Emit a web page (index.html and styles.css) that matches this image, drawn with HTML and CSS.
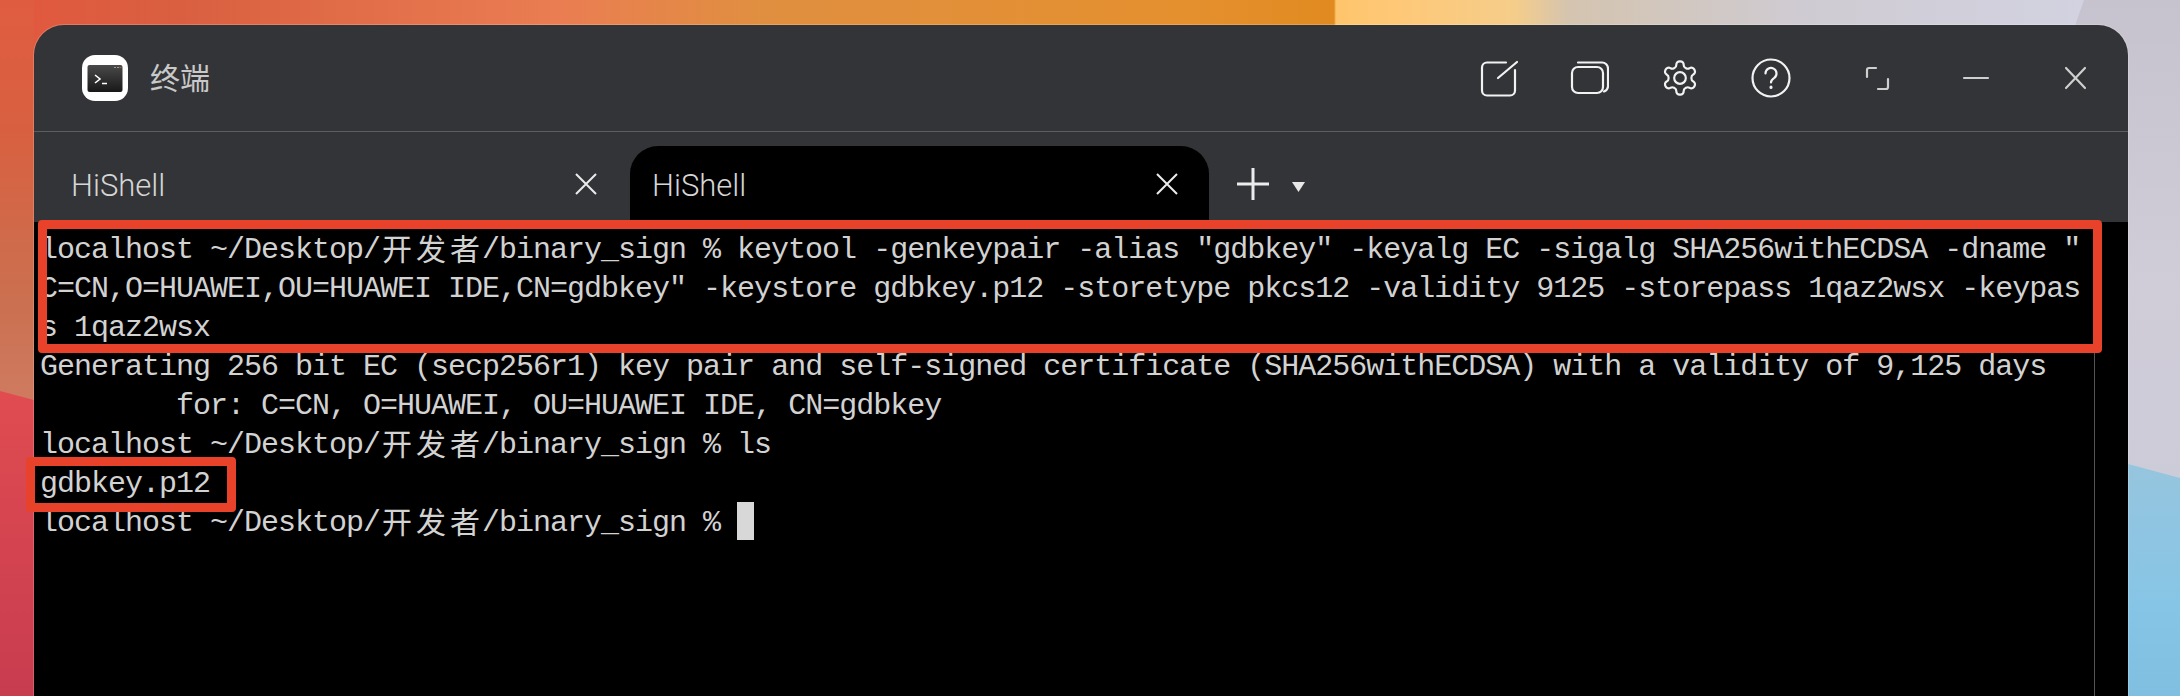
FILE: index.html
```html
<!DOCTYPE html>
<html lang="zh">
<head>
<meta charset="utf-8">
<title>终端</title>
<link rel="stylesheet" href="styles.css">
</head>
<body>
<div class="wedge"></div>
<div class="blue"></div>
<div class="wall-left"></div>
<div class="pink"></div>
<main class="window">
  <header class="titlebar">
    <svg class="appicon" viewBox="0 0 46 46">
      <rect width="46" height="46" rx="13" fill="#fff"/>
      <defs><linearGradient id="g" x1="0" y1="0" x2="0" y2="1"><stop offset="0" stop-color="#4a4a4a"/><stop offset="1" stop-color="#181818"/></linearGradient></defs>
      <rect x="5.500" y="10" width="35" height="27" rx="2" fill="url(#g)"/>
      <path d="M13 20l5 4-5 4" fill="none" stroke="#fff" stroke-width="1.600"/>
      <path d="M20 28.500h5" stroke="#fff" stroke-width="1.600"/>
      <path d="M32 12.500h2M35 12.500h2" stroke="#999" stroke-width="1"/>
      <path d="M37.500 12.500h2" stroke="#c0503c" stroke-width="1"/>
    </svg>
    <span class="apptitle">终端</span>
    <div class="tools">
      <svg class="ic" viewBox="0 0 40 40"><path d="M28 4.500H9a5 5 0 0 0-5 5v23a5 5 0 0 0 5 5h23a5 5 0 0 0 5-5V12"/><path d="M39 4L20 20"/></svg>
      <svg class="ic" viewBox="0 0 40 40"><rect x="3" y="9" width="31" height="26" rx="6"/><path d="M9 4.500h24a6 6 0 0 1 6 6v18a6 6 0 0 1-4 5"/></svg>
      <svg class="ic" viewBox="0 0 24 24"><path class="thin" d="M12.220 2h-.44a2 2 0 0 0-2 2v.18a2 2 0 0 1-1 1.730l-.43.25a2 2 0 0 1-2 0l-.15-.08a2 2 0 0 0-2.730.73l-.22.38a2 2 0 0 0 .73 2.730l.15.1a2 2 0 0 1 1 1.720v.51a2 2 0 0 1-1 1.740l-.15.09a2 2 0 0 0-.73 2.730l.22.38a2 2 0 0 0 2.730.73l.15-.08a2 2 0 0 1 2 0l.43.25a2 2 0 0 1 1 1.730V20a2 2 0 0 0 2 2h.44a2 2 0 0 0 2-2v-.18a2 2 0 0 1 1-1.730l.43-.25a2 2 0 0 1 2 0l.15.08a2 2 0 0 0 2.730-.73l.22-.39a2 2 0 0 0-.73-2.730l-.15-.08a2 2 0 0 1-1-1.740v-.5a2 2 0 0 1 1-1.740l.15-.09a2 2 0 0 0 .73-2.730l-.22-.38a2 2 0 0 0-2.730-.73l-.15.08a2 2 0 0 1-2 0l-.43-.25a2 2 0 0 1-1-1.730V4a2 2 0 0 0-2-2z"/><circle class="thin" cx="12" cy="12" r="3.500"/></svg>
      <svg class="ic" viewBox="0 0 40 40"><circle cx="20" cy="20" r="18.500"/><path d="M14.500 15.500a5.500 5.500 0 1 1 8.500 4.600c-2 1.300-3 2.400-3 4.400"/><path class="dot" d="M20 29v.5"/></svg>
      <div class="winbtns">
        <svg class="ic dim" viewBox="0 0 40 40"><path d="M10 19v-7a2 2 0 0 1 2-2h7"/><path d="M31 21v8a2 2 0 0 1-2 2h-8"/></svg>
        <svg class="ic dim" viewBox="0 0 40 40"><path d="M8 20h24"/></svg>
        <svg class="ic dim" viewBox="0 0 40 40"><path d="M11 10l19 20M30 10L11 30"/></svg>
      </div>
    </div>
  </header>
  <nav class="tabbar">
    <div class="tab first">
      <span class="tabname">HiShell</span>
      <svg class="tabx" viewBox="0 0 24 24"><path d="M2 2l20 20M22 2L2 22"/></svg>
    </div>
    <div class="tab active">
      <span class="tabname">HiShell</span>
      <svg class="tabx" viewBox="0 0 24 24"><path d="M2 2l20 20M22 2L2 22"/></svg>
    </div>
    <svg class="plus" viewBox="0 0 32 32"><path d="M0 16h32M16 0v32"/></svg>
    <span class="caret"></span>
  </nav>
  <section class="term">
    <div class="line">localhost ~/Desktop/<span class="cjk">开发者</span>/binary_sign % keytool -genkeypair -alias "gdbkey" -keyalg EC -sigalg SHA256withECDSA -dname "</div>
    <div class="line">C=CN,O=HUAWEI,OU=HUAWEI IDE,CN=gdbkey" -keystore gdbkey.p12 -storetype pkcs12 -validity 9125 -storepass 1qaz2wsx -keypas</div>
    <div class="line">s 1qaz2wsx</div>
    <div class="line">Generating 256 bit EC (secp256r1) key pair and self-signed certificate (SHA256withECDSA) with a validity of 9,125 days</div>
    <div class="line">        for: C=CN, O=HUAWEI, OU=HUAWEI IDE, CN=gdbkey</div>
    <div class="line">localhost ~/Desktop/<span class="cjk">开发者</span>/binary_sign % ls</div>
    <div class="line">gdbkey.p12</div>
    <div class="line">localhost ~/Desktop/<span class="cjk">开发者</span>/binary_sign % <span class="cursor"></span></div>
    <div class="rule"></div>
  </section>
</main>
<div class="mark mark-a"></div>
<div class="mark mark-b"></div>
</body>
</html>
```
FILE: styles.css
```css
* { box-sizing: border-box; }
html, body { margin: 0; height: 696px; overflow: hidden; }
body {
  position: relative;
  padding: 25px 52px 0 34px;
  background:
    linear-gradient(90deg, #e2583f 0, #d95f40 180px, #ea7d52 556px, #e08f40 765px, #e4902f 1180px, #e08a20 1334px, #ffc56c 1336px, #fec878 1400px, #f5cd8a 1515px, #d4c4b0 1570px, #cfcbd2 1800px, #d2d2e0 2080px);
}
.wedge {
  position: absolute; left: 2070px; top: 0; width: 110px; height: 480px;
  background: linear-gradient(180deg, #c6c2ce, #d0ccd8 60%, #ccccd8);
  clip-path: polygon(14px 0, 110px 0, 110px 100%, 0 100%, 0 40px);
}
.blue {
  position: absolute; left: 2128px; top: 464px; width: 52px; height: 232px;
  background: linear-gradient(180deg, #96c5de, #87c5e6 60%, #80bfdf);
  clip-path: polygon(0 0, 100% 14px, 100% 100%, 0 100%);
}
.wall-left {
  position: absolute; left: 0; top: 0; width: 34px; height: 400px;
  background: linear-gradient(180deg, #e05c40 0, #d86040 130px, #cb7050 300px, #cf7a60 400px);
}
.pink {
  position: absolute; left: 0; top: 391px; width: 34px; height: 305px;
  background: linear-gradient(180deg, #e04c50, #c83c50);
  clip-path: polygon(0 0, 100% 9px, 100% 100%, 0 100%);
}
.window {
  position: relative;
  display: flex; flex-direction: column;
  width: 2094px; height: 671px;
  border-radius: 30px 30px 0 0;
  background: #333437;
  overflow: hidden;
  box-shadow: 0 0 0 1px rgba(255, 255, 255, .18);
}
.titlebar {
  display: flex; align-items: center; flex: none;
  height: 107px; padding: 0 33px 1px 48px;
  border-bottom: 1px solid #5c5d60;
}
.appicon { width: 46px; height: 46px; flex: none; }
.apptitle {
  margin: 0 0 3px 22px;
  font: 400 30px/1 "Noto Sans CJK SC", sans-serif;
  color: #c9c9c9;
}
.tools { margin-left: auto; display: flex; align-items: center; gap: 51px; }
.winbtns { display: flex; align-items: center; gap: 59px; margin-left: 15px; }
.ic { width: 40px; height: 40px; flex: none; fill: none; stroke: #f2f2f2; stroke-width: 2.200; stroke-linecap: round; }
.ic .thin { stroke-width: 1.300; }
.ic .dot { stroke-width: 3; }
.ic.dim { stroke: #cfcfcf; }
.tabbar {
  display: flex; align-items: flex-end; flex: none;
  height: 90px;
}
.tab {
  display: flex; align-items: center; justify-content: space-between;
  height: 76px;
  font: 300 31px/1 Roboto, sans-serif;
  color: #d6d6d6;
}
.tabname { position: relative; top: 1px; }
.tab.first { width: 596px; padding: 0 32px 0 37px; }
.tab.active { width: 579px; padding: 0 30px 0 22px; background: #000; border-radius: 28px 28px 0 0; }
.tabx { width: 24px; height: 24px; fill: none; stroke: #ececec; stroke-width: 2; }
.plus { width: 32px; height: 32px; margin: 0 0 22px 28px; fill: none; stroke: #ececec; stroke-width: 3; }
.caret {
  width: 13px; height: 10px; margin: 0 0 30px 23px;
  background: #e8e8e8;
  clip-path: polygon(0 0, 100% 0, 50% 100%);
}
.term {
  position: relative;
  flex: 1;
  background: #000;
  padding: 9px 0 0 6px;
  font: 400 30px/39px "Liberation Mono", monospace;
  letter-spacing: -1px;
  color: #d2d2d2;
}
.line { height: 39px; white-space: pre; }
.cjk {
  font: 400 30px/33px "Noto Sans CJK SC", sans-serif;
  letter-spacing: 4px;
  display: inline-block;
  width: 102px;
  height: 39px;
  vertical-align: top;
  padding-left: 2px;
}
.cursor { display: inline-block; width: 17px; height: 38px; background: #d8d8d8; vertical-align: top; margin-top: -2px; }
.rule { position: absolute; left: 2060px; top: 0; bottom: 0; width: 1px; background: #555; }
.mark { position: absolute; border: 9px solid #e8432a; border-radius: 4px; }
.mark-a { left: 38px; top: 220px; width: 2064px; height: 133px; }
.mark-b { left: 26px; top: 457px; width: 210px; height: 55px; }
```
